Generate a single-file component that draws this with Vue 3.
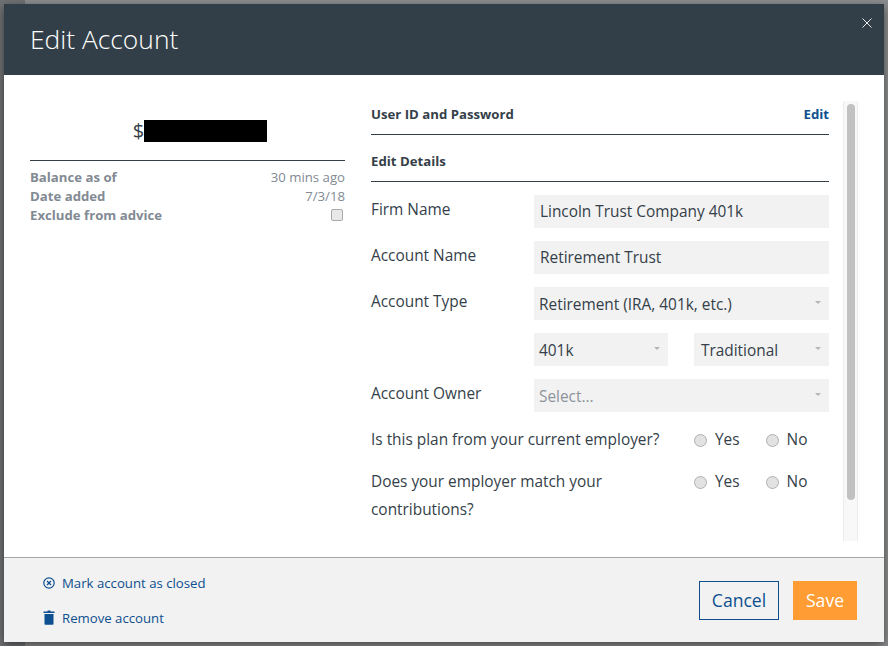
<template>
  <div class="backdrop">
    <div class="modal">
      <header class="modal-header">
        <h1>Edit Account</h1>
        <svg class="close" width="10" height="10" viewBox="0 0 10 10">
          <path d="M0.5 0.5L9.5 9.5M9.5 0.5L0.5 9.5" stroke="#e8eaec" stroke-width="1" fill="none" />
        </svg>
      </header>

      <div class="modal-body">
        <aside class="summary">
          <div class="balance">
            <span>$</span>
            <span class="redacted"></span>
          </div>
          <div class="summary-rows">
            <div class="summary-row" v-for="row in summary" :key="row.label">
              <b>{{ row.label }}</b>
              <span>{{ row.value }}</span>
            </div>
            <div class="summary-row">
              <b>Exclude from advice</b>
              <span class="checkbox"></span>
            </div>
          </div>
        </aside>

        <section class="details">
          <div class="section-title first">
            <b>User ID and Password</b>
            <a class="edit">Edit</a>
          </div>
          <div class="section-title second">
            <b>Edit Details</b>
          </div>

          <div class="field" v-for="field in textFields" :key="field.label">
            <label>{{ field.label }}</label>
            <div class="input">{{ field.value }}</div>
          </div>

          <div class="field">
            <label>Account Type</label>
            <div class="select">
              <span>Retirement (IRA, 401k, etc.)</span>
              <i class="caret"></i>
            </div>
          </div>

          <div class="field">
            <label></label>
            <div class="select-pair">
              <div class="select">
                <span>401k</span>
                <i class="caret"></i>
              </div>
              <div class="select">
                <span>Traditional</span>
                <i class="caret"></i>
              </div>
            </div>
          </div>

          <div class="field">
            <label>Account Owner</label>
            <div class="select placeholder">
              <span>Select...</span>
              <i class="caret"></i>
            </div>
          </div>

          <div class="question" v-for="q in questions" :key="q">
            <p>{{ q }}</p>
            <div class="radios">
              <span class="radio-item"><i class="radio"></i>Yes</span>
              <span class="radio-item"><i class="radio"></i>No</span>
            </div>
          </div>
        </section>

        <div class="scrollbar">
          <div class="thumb"></div>
        </div>
      </div>

      <footer class="modal-footer">
        <div class="links">
          <a>
            <svg width="12" height="12" viewBox="0 0 12 12">
              <circle cx="6" cy="6" r="5.2" fill="none" stroke="#0d4f8f" stroke-width="1.2" />
              <path d="M4 4L8 8M8 4L4 8" stroke="#0d4f8f" stroke-width="1.3" fill="none" />
            </svg>
            Mark account as closed
          </a>
          <a>
            <svg width="12" height="15" viewBox="0 0 12 15">
              <path d="M4.5 0.5H7.5V1.5H11.5V3H0.5V1.5H4.5Z" fill="#0d4f8f" />
              <path d="M1.5 4H10.5V14C10.5 14.5 10.2 14.8 9.7 14.8H2.3C1.8 14.8 1.5 14.5 1.5 14Z" fill="#0d4f8f" />
            </svg>
            Remove account
          </a>
        </div>
        <div class="buttons">
          <button class="cancel">Cancel</button>
          <button class="save">Save</button>
        </div>
      </footer>
    </div>
  </div>
</template>

<script setup>
const summary = [
  { label: "Balance as of", value: "30 mins ago" },
  { label: "Date added", value: "7/3/18" },
];

const textFields = [
  { label: "Firm Name", value: "Lincoln Trust Company 401k" },
  { label: "Account Name", value: "Retirement Trust" },
];

const questions = [
  "Is this plan from your current employer?",
  "Does your employer match your contributions?",
];
</script>

<style>
html,
body {
  margin: 0;
  background: #6f7275;
}
</style>

<style scoped>
.backdrop {
  width: 888px;
  height: 646px;
  box-sizing: border-box;
  padding: 4px;
  background: linear-gradient(90deg, #6f7173 25px, #8c8d8e 25px);
  font-family: "Open Sans", "Liberation Sans", sans-serif;
  color: #353f49;
  overflow: hidden;
}

.modal {
  width: 880px;
  height: 638px;
  display: flex;
  flex-direction: column;
  background: #fff;
  box-shadow: 0 3px 9px rgba(0, 0, 0, 0.5);
}

.modal-header {
  height: 71px;
  flex: none;
  background: #333f48;
  display: flex;
  align-items: center;
  padding: 0 12px 2px 26px;
  box-sizing: border-box;
  position: relative;
}

.modal-header h1 {
  margin: 0;
  font-size: 26.4px;
  font-weight: 300;
  color: #fff;
}

.close {
  position: absolute;
  right: 12px;
  top: 14px;
}

.modal-body {
  flex: 1;
  display: flex;
  align-items: flex-start;
  padding: 27px 0 0 26px;
  min-height: 0;
}

.summary {
  width: 315px;
  flex: none;
}

.balance {
  height: 44px;
  display: flex;
  justify-content: center;
  align-items: flex-start;
  font-size: 20px;
  line-height: 30px;
  padding: 14px 0 0 25px;
  border-bottom: 1px solid #333f48;
}

.redacted {
  width: 123px;
  height: 22px;
  margin-top: 4px;
  background: #000;
}

.summary-rows {
  padding-top: 6px;
}

.summary-row {
  display: flex;
  justify-content: space-between;
  align-items: center;
  height: 19px;
  font-size: 13.2px;
  color: #828a93;
}

.summary-row b {
  font-weight: 700;
}

.checkbox {
  width: 10px;
  height: 10px;
  margin-right: 2px;
  border: 1px solid #a9a9a9;
  border-radius: 2px;
  background: #e8e8e8;
}

.details {
  width: 458px;
  margin-left: 26px;
  flex: none;
  font-size: 15.4px;
}

.section-title {
  display: flex;
  justify-content: space-between;
  align-items: center;
  font-size: 13.2px;
  border-bottom: 1px solid #333f48;
  box-sizing: border-box;
}

.section-title.first {
  height: 33px;
  padding-bottom: 8px;
}

.section-title.second {
  height: 47px;
  padding-top: 6px;
}

.edit {
  color: #0d4f8f;
  font-weight: 700;
}

.field {
  display: flex;
  margin-top: 13px;
}

.field label {
  width: 163px;
  flex: none;
  line-height: 30px;
}

.input,
.select {
  flex: 1;
  height: 33px;
  line-height: 33px;
  background: #f2f2f2;
  padding: 0 6px;
  box-sizing: border-box;
}

.select {
  display: flex;
  justify-content: space-between;
  align-items: center;
  padding-left: 5px;
  padding-right: 7px;
}

.select span {
  margin-top: 2px;
}

.select-pair {
  flex: 1;
  display: flex;
  gap: 26px;
}

.select-pair .select:first-child {
  flex: none;
  width: 134px;
}

.select-pair .select:last-child {
  padding-left: 7px;
}

.placeholder {
  color: #8d939a;
}

.caret {
  width: 0;
  height: 0;
  margin: 0 1px 3px 0;
  border-left: 3px solid transparent;
  border-right: 3px solid transparent;
  border-top: 3px solid #b5b5b5;
}

.question {
  display: flex;
  margin-top: 14px;
  line-height: 28px;
}

.question p {
  width: 323px;
  flex: none;
  margin: 0;
}

.radios {
  display: flex;
  gap: 26px;
}

.radio-item {
  display: flex;
  align-items: center;
  height: 28px;
  gap: 8px;
}

.radio {
  width: 11px;
  height: 11px;
  border: 1px solid #b0b0b0;
  border-radius: 50%;
  background: #e2e2e2;
}

.scrollbar {
  width: 15px;
  height: 440px;
  margin: -1px 0 0 14px;
  background: #f8f8f8;
  border-left: 1px solid #ececec;
  border-right: 1px solid #ececec;
  box-sizing: border-box;
  flex: none;
  padding: 3px 3px;
}

.thumb {
  width: 8px;
  height: 396px;
  background: #c1c1c1;
  border-radius: 4px;
}

.modal-footer {
  height: 85px;
  flex: none;
  background: #f2f2f2;
  border-top: 1px solid #a5a5a5;
  box-sizing: border-box;
  display: flex;
  justify-content: space-between;
  padding: 0 27px 0 39px;
}

.links {
  display: flex;
  flex-direction: column;
  gap: 16px;
  padding-top: 15px;
}

.links a {
  display: flex;
  align-items: center;
  gap: 7px;
  height: 19px;
  font-size: 13.2px;
  color: #0d4f8f;
}

.buttons {
  display: flex;
  gap: 14px;
  padding-top: 23px;
}

.buttons button {
  height: 39px;
  font-family: inherit;
  font-size: 17.6px;
  border: 0;
  padding: 0 0 2px;
}

.buttons .cancel {
  width: 80px;
  background: transparent;
  border: 1px solid #0d4f8f;
  color: #0d4f8f;
}

.save {
  width: 64px;
  background: #ff9c33;
  color: #fff;
}
</style>
